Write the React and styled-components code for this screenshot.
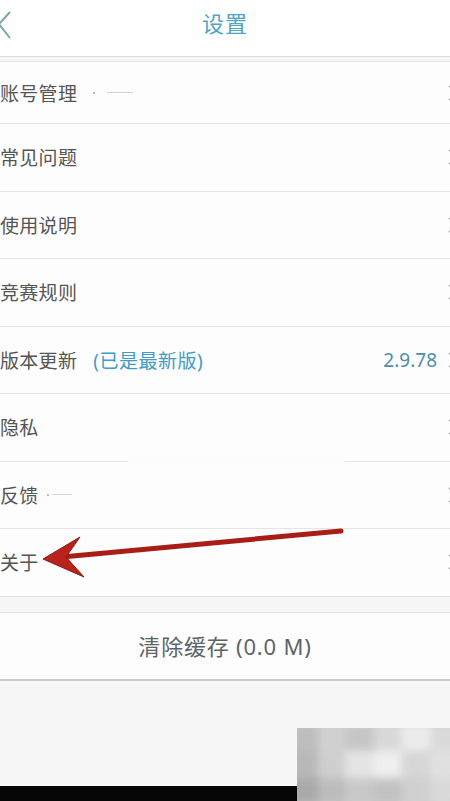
import React from "react";
import styled, { createGlobalStyle } from "styled-components";

const Global = createGlobalStyle`
  html, body { margin: 0; padding: 0; background: #f7f7f7; overflow: hidden; }
  #root { width: 450px; height: 801px; }
  * { box-sizing: border-box; }
`;

const Page = styled.div`
  position: relative;
  width: 450px;
  height: 801px;
  display: flex;
  flex-direction: column;
  background: #f7f7f7;
  font-family: "Noto Sans", "Noto Sans CJK SC", sans-serif;
  overflow: hidden;
`;

const Header = styled.header`
  height: 57px;
  flex: none;
  display: grid;
  grid-template-columns: 60px 1fr 60px;
  align-items: center;
  background: #fefefe;
  border-bottom: 1px solid #dcdcdc;
`;

const Back = styled.svg`
  width: 14px;
  height: 30px;
  margin-left: -3px;
  margin-top: -6px;
`;

const Title = styled.h1`
  margin: 0;
  text-align: center;
  font-size: 22px;
  font-weight: 400;
  color: #4fa5c2;
  letter-spacing: 1px;
  margin-top: -13px;
`;

const Spacer = styled.div`
  flex: none;
  height: ${(p) => p.$h}px;
  background: #f6f6f6;
`;

const List = styled.section`
  flex: none;
  background: #fdfdfd;
  border-top: 1px solid #e4e4e4;
`;

const Row = styled.div`
  height: ${(p) => (p.$first ? 61 : 66.5)}px;
  display: flex;
  align-items: center;
  font-size: 19px;
  color: #555;
`;

const Label = styled.span`
  margin-left: 0;
  letter-spacing: 0.3px;
`;

const Note = styled.span`
  margin-left: 16px;
  color: #3f9cc6;
  letter-spacing: 0.5px;
`;

const Value = styled.span`
  margin-left: auto;
  color: #4c90aa;
  font-size: 19px;
`;

const Chevron = styled.svg`
  width: 12px;
  height: 18px;
  margin-left: ${(p) => (p.$afterValue ? "10px" : "auto")};
  margin-right: -9px;
  flex: none;
`;

const Redact = styled.span`
  display: inline-flex;
  align-items: center;
  gap: ${(p) => p.$gap}px;
  margin-left: ${(p) => p.$ml}px;
  &::before {
    content: "";
    width: 2px;
    height: 2px;
    background: #bbb;
  }
  &::after {
    content: "";
    width: ${(p) => p.$w}px;
    height: 1px;
    background: #d4d4d4;
  }
`;

const Divider = styled.div`
  height: 1px;
  background: ${(p) =>
    p.$broken
      ? "linear-gradient(to right, #e4e4e4 0 128px, #fafafa 128px 345px, #e4e4e4 345px)"
      : "#e4e4e4"};
`;

const ClearButton = styled.button`
  flex: none;
  height: 69px;
  width: 100%;
  border: none;
  border-top: 1px solid #e2e2e2;
  border-bottom: 2px solid #cacaca;
  background: #fdfdfd;
  font-family: "Noto Sans", "Noto Sans CJK SC", sans-serif;
  font-size: 22px;
  color: #5b6565;
  letter-spacing: 0.8px;
  padding: 0 0 2px;
`;

const Fill = styled.div`
  flex: 1;
  background: #f7f7f7;
`;

const BottomBar = styled.div`
  flex: none;
  height: 15px;
  background: #050505;
`;

const Watermark = styled.div`
  position: absolute;
  left: 297px;
  top: 728px;
  width: 153px;
  height: 73px;
  overflow: hidden;
  background: #d2d2d2;
`;

const WatermarkGrid = styled.div`
  width: 100%;
  height: 100%;
  display: grid;
  grid-template-columns: repeat(6, 1fr);
  grid-template-rows: repeat(3, 1fr);
  filter: blur(4px);
  transform: scale(1.1);
`;

const Cell = styled.div`
  background: ${(p) => p.$c};
`;

const Arrow = styled.svg`
  position: absolute;
  left: 0;
  top: 0;
  width: 450px;
  height: 801px;
  pointer-events: none;
`;

const items = [
  { label: "账号管理", redact: { ml: 16, gap: 12, w: 26 }, first: true },
  { label: "常见问题" },
  { label: "使用说明" },
  { label: "竞赛规则" },
  { label: "版本更新", note: "(已是最新版)", value: "2.9.78" },
  { label: "隐私", broken: true },
  { label: "反馈", redact: { ml: 8, gap: 3, w: 20 } },
  { label: "关于" },
];

const wmColors = [
  "#bdbdbd", "#d0d0d0", "#c6c6c6", "#d8d8d8", "#ececec", "#dadada",
  "#b8b8b8", "#cfcfcf", "#e4e4e4", "#efefef", "#d6d6d6", "#e0e0e0",
  "#a9a9a9", "#bcbcbc", "#c8c8c8", "#c2c2c2", "#cfcfcf", "#d9d9d9",
];

const ChevronIcon = ({ afterValue }) => (
  <Chevron $afterValue={afterValue} viewBox="0 0 12 18">
    <polyline points="2,2 10,9 2,16" fill="none" stroke="#a8a8a8" strokeWidth="1.6" />
  </Chevron>
);

export default function App() {
  return (
    <>
      <Global />
      <Page>
        <Header>
          <Back viewBox="0 0 14 30">
            <polyline points="13,2 2,14 13,28" fill="none" stroke="#7aa6b4" strokeWidth="2" />
          </Back>
          <Title>设置</Title>
          <span />
        </Header>
        <Spacer $h={4} />
        <List>
          {items.map((it) => (
            <React.Fragment key={it.label}>
              <Row $first={it.first}>
                <Label>{it.label}</Label>
                {it.redact && <Redact $ml={it.redact.ml} $gap={it.redact.gap} $w={it.redact.w} />}
                {it.note && <Note>{it.note}</Note>}
                {it.value && <Value>{it.value}</Value>}
                <ChevronIcon afterValue={!!it.value} />
              </Row>
              <Divider $broken={it.broken} />
            </React.Fragment>
          ))}
        </List>
        <Spacer $h={15} />
        <ClearButton>清除缓存 (0.0 M)</ClearButton>
        <Fill />
        <BottomBar />
        <Watermark>
          <WatermarkGrid>
            {wmColors.map((c, i) => (
              <Cell key={i} $c={c} />
            ))}
          </WatermarkGrid>
        </Watermark>
        <Arrow viewBox="0 0 450 801">
          <line x1="341" y1="531" x2="62" y2="557" stroke="#a91d17" strokeWidth="5" strokeLinecap="round" />
          <polygon points="43,559 80,537 66,557 84,577" fill="#b8231c" stroke="#8e1812" strokeWidth="1" strokeLinejoin="round" />
        </Arrow>
      </Page>
    </>
  );
}
